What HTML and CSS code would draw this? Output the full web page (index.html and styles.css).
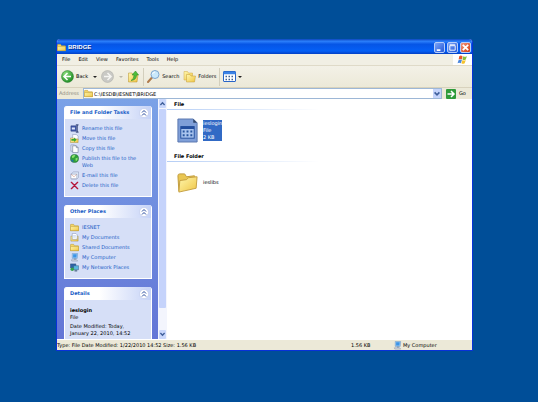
FILE: index.html
```html
<!DOCTYPE html>
<html lang="en">
  <head>
    <meta charset="UTF-8" />
    <meta name="viewport" content="width=device-width, initial-scale=1.0" />
    <title>BRIDGE</title>
    <link rel="stylesheet" href="styles.css">
  </head>
  <body>
    <!-- Shared icons -->
    <svg class="defs" aria-hidden="true">
      <defs>
        <linearGradient id="gold" x1="0" y1="0" x2="1" y2="1">
          <stop offset="0" stop-color="#fff7ae" />
          <stop offset="1" stop-color="#efc544" />
        </linearGradient>
        <radialGradient id="green" cx="35%" cy="30%" r="75%">
          <stop offset="0" stop-color="#8fe07f" />
          <stop offset="1" stop-color="#1c8a22" />
        </radialGradient>
      </defs>
      <symbol id="folder" viewBox="0 0 20 20">
        <path d="M1 17V4q0-1 1-1h6l2 3h8q1 0 1 1v10z" fill="#f3d565" stroke="#b58f2a" />
        <path d="M1 17V8h18v9z" fill="url(#gold)" stroke="#b58f2a" />
      </symbol>
      <symbol id="computer" viewBox="0 0 20 20">
        <path d="M5 1h12l-1 11H5z" fill="#9ccdf6" stroke="#5c86bd" />
        <path d="M7 3h8l-1 7H7z" fill="#3d94e6" />
        <path d="M9 12h4v3H9z" fill="#7d90a8" />
        <path d="M3 15h12l2 3H4z" fill="#d8dde6" stroke="#7a89a0" />
      </symbol>
      <symbol id="chevrons" viewBox="0 0 20 20">
        <circle cx="10" cy="10" r="9" fill="#fff" stroke="#b3bfe6" />
        <path d="m6 9 4-4 4 4M6 15l4-4 4 4" fill="none" stroke="#24479c" stroke-width="2" />
      </symbol>
    </svg>

    <div class="window">
      <header class="title-bar">
        <svg class="icon"><use href="#folder" /></svg>
        <h1>BRIDGE</h1>
        <button class="win-btn" aria-label="Minimize"><svg viewBox="0 0 10 10"><path d="M2 8h4" stroke="#fff" stroke-width="2" /></svg></button>
        <button class="win-btn" aria-label="Maximize"><svg viewBox="0 0 10 10"><path d="M2 3h6v5H2z" fill="none" stroke="#fff" /><path d="M2 2h6" stroke="#fff" /></svg></button>
        <button class="win-btn win-close" aria-label="Close"><svg viewBox="0 0 10 10"><path d="m2 2 6 6M8 2 2 8" stroke="#fff" stroke-width="2" /></svg></button>
      </header>

      <div class="menu-row">
        <nav class="menu">
          <a href="#">File</a>
          <a href="#">Edit</a>
          <a href="#">View</a>
          <a href="#">Favorites</a>
          <a href="#">Tools</a>
          <a href="#">Help</a>
        </nav>
        <div class="flag">
          <svg viewBox="0 0 20 18">
            <path d="M4 2q3-2 6 0L9 8Q6 6 3 8z" fill="#e9582a" />
            <path d="M11 2q3 2 7 0l-2 6q-3 2-6 0z" fill="#86bf3d" />
            <path d="M3 9q3-2 6 0l-2 6q-3-2-6 0z" fill="#4a86dd" />
            <path d="M10 9q3 2 6 0l-2 6q-3 2-6 0z" fill="#f5c32e" />
          </svg>
        </div>
      </div>

      <div class="toolbar">
        <button class="tool">
          <svg class="icon-lg" viewBox="0 0 26 26"><circle cx="13" cy="13" r="12" fill="url(#green)" stroke="#2b7d2f" /><path d="m13 6-7 7 7 7M7 13h13" fill="none" stroke="#fff" stroke-width="3" /></svg>
          Back
          <span class="caret"></span>
        </button>
        <button class="tool tool-forward" aria-label="Forward">
          <svg class="icon-lg" viewBox="0 0 26 26"><circle cx="13" cy="13" r="12" fill="#c9c9c5" stroke="#aaaaa5" /><path d="m13 6 7 7-7 7M19 13H6" fill="none" stroke="#f5f5f2" stroke-width="3" /></svg>
          <span class="caret caret-off"></span>
        </button>
        <button class="tool" aria-label="Up">
          <svg class="icon-lg" viewBox="0 0 26 26"><path d="M3 6h7l2 3h10l-2 15H3z" fill="url(#gold)" stroke="#b58f2a" /><path d="M8 21q6-3 6-11h-4l7-8 6 8h-4q0 10-11 11z" fill="#4fbd3a" stroke="#26801f" /></svg>
        </button>
        <span class="divider"></span>
        <button class="tool">
          <svg class="icon-lg" viewBox="0 0 26 26"><path d="m2 24 8-9" stroke="#b07b4c" stroke-width="4" stroke-linecap="round" /><circle cx="16" cy="9" r="8" fill="#c9e8fb" stroke="#7fa6cd" stroke-width="2" /><path d="M11 8q1-4 5-4" fill="none" stroke="#fff" stroke-width="2" /></svg>
          Search
        </button>
        <button class="tool">
          <svg class="icon-lg" viewBox="0 0 26 26"><path d="M2 20V3h7l2 3h8v14z" fill="url(#gold)" stroke="#d1ab45" /><path d="M7 24V9h7l2 3h9l-2 12z" fill="url(#gold)" stroke="#c39b35" /></svg>
          Folders
        </button>
        <span class="divider"></span>
        <button class="tool tool-views" aria-label="Views">
          <svg class="icon-view" viewBox="0 0 26 22"><rect x="1" y="1" width="24" height="20" rx="1" fill="#fff" stroke="#2865c7" stroke-width="2" /><path d="M1 4h24" stroke="#3c83e5" stroke-width="5" /><path d="M5 11h16M5 17h16" stroke="#40608f" stroke-width="3" stroke-dasharray="3 3" /></svg>
          <span class="caret"></span>
        </button>
      </div>

      <form class="address-bar">
        <label for="address">Address</label>
        <div class="address-box">
          <svg class="icon"><use href="#folder" /></svg>
          <input id="address" type="text" value="C:\IESDB\IESNET\BRIDGE">
          <button class="drop" type="button" aria-label="Show addresses"><svg viewBox="0 0 10 10"><path d="m2 3 3 3 3-3" fill="none" stroke="#3f5f9c" stroke-width="2" /></svg></button>
        </div>
        <button class="go" type="button">
          <svg viewBox="0 0 20 20"><rect width="20" height="20" rx="2" fill="#2f9b3a" /><path d="m10 4 6 6-6 6M15 10H3" fill="none" stroke="#fff" stroke-width="3" /></svg>
          Go
        </button>
      </form>

      <div class="content">
        <aside class="sidebar">
          <section class="panel">
            <div class="panel-head">
              <h2>File and Folder Tasks</h2>
              <button aria-label="Collapse"><svg><use href="#chevrons" /></svg></button>
            </div>
            <ul class="links">
              <li><svg class="icon" viewBox="0 0 20 20"><path d="M2 4h12v12H2z" fill="#4158a8" stroke="#283b7c" /><path d="M4 8h7v4H4z" fill="#dfe7fb" /><path d="M13 2h6M16 2v16M13 18h6" stroke="#1c2e66" stroke-width="2" /></svg><a href="#">Rename this file</a></li>
              <li><svg class="icon" viewBox="0 0 20 20"><path d="M6 1h8l4 4v8H6z" fill="#fff" stroke="#7080a8" /><path d="M1 9h6l2 2h9v8H1z" fill="url(#gold)" stroke="#a88725" /><path d="M3 11h6V8l6 5-6 5v-3H3z" fill="#3aa832" /></svg><a href="#">Move this file</a></li>
              <li><svg class="icon" viewBox="0 0 20 20"><path d="M2 2h8l3 3v11H2z" fill="#e6ebf7" stroke="#66779c" /><path d="M6 4h8l4 4v11H6z" fill="#fff" stroke="#40516f" /><path d="M14 4v4h4" fill="none" stroke="#40516f" /></svg><a href="#">Copy this file</a></li>
              <li><svg class="icon" viewBox="0 0 20 20"><circle cx="10" cy="10" r="9" fill="#2d9f3a" stroke="#16612b" /><path d="M4 5q4-4 8-2l-3 5-4 1zM12 10l5-2q1 6-4 8z" fill="#8de06e" /><path d="m2 12 5 2 1 4q-5-1-6-6z" fill="#256dc0" /></svg><a href="#">Publish this file to the<br />Web</a></li>
              <li><svg class="icon" viewBox="0 0 20 20"><path d="M3 6 8 2h11v12l-4 4H3z" fill="#dbe6f7" stroke="#7a87a8" /><path d="M2 7h13v10H2z" fill="#fff" stroke="#7a87a8" /><path d="m2 7 7 6 6-6" fill="none" stroke="#c87d68" /></svg><a href="#">E-mail this file</a></li>
              <li><svg class="icon" viewBox="0 0 20 20"><path d="m3 3 14 14M17 3 3 17" stroke="#b5173c" stroke-width="3" stroke-linecap="round" /></svg><a href="#">Delete this file</a></li>
            </ul>
          </section>

          <section class="panel">
            <div class="panel-head">
              <h2>Other Places</h2>
              <button aria-label="Collapse"><svg><use href="#chevrons" /></svg></button>
            </div>
            <ul class="links">
              <li><svg class="icon"><use href="#folder" /></svg><a href="#">IESNET</a></li>
              <li><svg class="icon" viewBox="0 0 20 20"><path d="M2 7h16v11H2z" fill="url(#gold)" stroke="#a88725" /><path d="M5 1h8l3 3v10H5z" fill="#fff" stroke="#7080a8" /><path d="M7 6h6M7 9h6" stroke="#7fa5d8" /></svg><a href="#">My Documents</a></li>
              <li><svg class="icon"><use href="#folder" /></svg><a href="#">Shared Documents</a></li>
              <li><svg class="icon"><use href="#computer" /></svg><a href="#">My Computer</a></li>
              <li><svg class="icon" viewBox="0 0 20 20"><path d="M1 2h12v9H1z" fill="#2e62a6" stroke="#264574" /><path d="M8 6h11v9H8z" fill="#58b7df" stroke="#31557f" /><path d="M10 15h6v4h-6z" fill="#657d9a" /><circle cx="5" cy="14" r="4" fill="#36a34a" /></svg><a href="#">My Network Places</a></li>
            </ul>
          </section>

          <section class="panel">
            <div class="panel-head">
              <h2>Details</h2>
              <button aria-label="Collapse"><svg><use href="#chevrons" /></svg></button>
            </div>
            <div class="details">
              <h3>ieslogin</h3>
              <p>File</p>
              <p class="modified">Date Modified: Today,<br />January 22, 2010, 14:52</p>
            </div>
          </section>
        </aside>

        <div class="scrollbar">
          <button aria-label="Scroll up"><svg viewBox="0 0 10 10"><path d="m2 7 3-3 3 3" fill="none" stroke="#3f5f9c" stroke-width="2" /></svg></button>
          <div class="thumb"></div>
          <button aria-label="Scroll down"><svg viewBox="0 0 10 10"><path d="m2 3 3 3 3-3" fill="none" stroke="#3f5f9c" stroke-width="2" /></svg></button>
        </div>

        <main class="files">
          <h2>File</h2>
          <a class="file selected" href="#">
            <svg viewBox="0 0 24 28">
              <path d="M2 2h16l4 4v20H2z" fill="#7f9fd8" stroke="#5875ad" />
              <path d="M18 2v4h4z" fill="#2f4568" />
              <rect x="5" y="10" width="14" height="12" fill="#a9c4ee" stroke="#244f9d" />
              <path d="M5 11h14" stroke="#234e9e" stroke-width="3" />
              <path d="M7 15h10M7 19h10" stroke="#28569f" stroke-width="2" stroke-dasharray="2 2" />
            </svg>
            <span class="file-text">ieslogin<br />File<br />2 KB</span>
          </a>
          <h2>File Folder</h2>
          <a class="file" href="#">
            <svg viewBox="0 0 24 28">
              <path d="M3 23 2 7q0-2 2-2h5l2 3 8-1q1 0 1 2v3z" fill="#e9c652" stroke="#c09b3b" />
              <path d="m3 24 1-12 7-1 2-2 9-1-1 12z" fill="url(#gold)" stroke="#c5a043" />
            </svg>
            <span class="file-text">ieslibs</span>
          </a>
        </main>
      </div>

      <footer class="status-bar">
        <span class="status-info">Type: File Date Modified: 1/22/2010 14:52 Size: 1.56 KB</span>
        <span class="status-size">1.56 KB</span>
        <span class="status-place"><svg class="icon"><use href="#computer" /></svg>My Computer</span>
      </footer>
    </div>
  </body>
</html>
```
FILE: styles.css
```css
* {
  box-sizing: border-box;
}

body {
  display: flex;
  min-height: 100vh;
  margin: 0;
  padding: 39px 65px 51px 56px;
  background-color: #004e98;
  color: #000;
  font-family: Tahoma, "DejaVu Sans", sans-serif;
  font-size: 5px;
  line-height: 7px;
}

h1,
h2,
h3,
p,
ul {
  margin: 0;
  padding: 0;
  font-size: 5px;
}

h1 {
  font-size: 6px;
  font-family: "Liberation Sans", Arial, sans-serif;
}

button,
input {
  margin: 0;
  padding: 0;
  border: none;
  background: none;
  color: inherit;
  font: inherit;
}

a {
  color: inherit;
  text-decoration: none;
}

svg {
  display: block;
  flex: none;
}

.defs {
  position: absolute;
  width: 0;
  height: 0;
}

.icon {
  width: 9px;
  height: 9px;
}

.icon-lg {
  width: 13px;
  height: 13px;
}

.icon-view {
  width: 13px;
  height: 11px;
}

.window {
  display: flex;
  flex-direction: column;
  flex: 1;
  min-width: 0;
  border: 1px solid #0831d9;
  border-top: none;
  border-radius: 4px 4px 0 0;
  background-color: #ece9d8;
  overflow: hidden;
}

.title-bar {
  display: flex;
  align-items: center;
  gap: 2px;
  height: 15px;
  padding: 1px 1px 0 0;
  background: linear-gradient(#0b45bd, #2c7ffb 15%, #0655e6 35%, #0560f6 80%, #0340c5);
  color: white;
}

.title-bar h1 {
  flex: 1;
  text-shadow: 1px 1px 0 #0a2f8a;
}

.win-btn {
  width: 11px;
  height: 11px;
  border: 1px solid #b5cdfa;
  border-radius: 2px;
  background: linear-gradient(135deg, #7ba4f8, #2458d8);
}

.win-close {
  background: linear-gradient(135deg, #f0967c, #d33c14);
}

.menu-row {
  display: flex;
  height: 12px;
  background-color: #f1efe4;
  border-bottom: 1px solid #dfdac8;
}

.menu {
  display: flex;
  flex: 1;
  align-items: center;
  gap: 8px;
  padding-left: 5px;
}

.flag {
  display: flex;
  align-items: center;
  justify-content: center;
  width: 19px;
  background-color: white;
}

.flag svg {
  width: 11px;
  height: 10px;
}

.toolbar {
  display: flex;
  align-items: center;
  gap: 4px;
  height: 22px;
  padding-left: 4px;
  background: linear-gradient(#f3f1e7, #ece9d8);
  border-bottom: 1px solid #d8d2bd;
}

.tool {
  display: flex;
  align-items: center;
  gap: 2px;
}

.caret {
  margin-left: 3px;
  border: 2px solid transparent;
  border-top-color: #222;
  border-bottom: none;
}

.caret-off {
  border-top-color: #bbb8aa;
}

.tool-views .caret {
  margin-left: 0;
}

.divider {
  width: 1px;
  height: 18px;
  margin: 0 -1px;
  background-color: #d3cfbd;
}

.address-bar {
  display: flex;
  align-items: center;
  gap: 4px;
  height: 11px;
  padding-left: 2px;
}

.address-bar label {
  color: #8a887c;
}

.address-box {
  display: flex;
  flex: 1;
  align-items: center;
  gap: 1px;
  height: 11px;
  border: 1px solid #9db7d6;
  background-color: white;
}

.address-box input {
  flex: 1;
  min-width: 0;
  height: 9px;
}

.drop {
  width: 8px;
  height: 9px;
  background-color: #c5d4fb;
}

.go {
  display: flex;
  align-items: center;
  gap: 3px;
  width: 26px;
}

.go svg {
  width: 10px;
  height: 10px;
}

.content {
  display: flex;
  flex: 1 0 240px;
  height: 240px;
  background-color: white;
}

.sidebar {
  display: flex;
  flex-direction: column;
  gap: 8px;
  width: 101px;
  padding: 7px 6px 0 7px;
  background: linear-gradient(#7ba2e7, #6375d6);
  overflow: hidden;
}

.panel {
  flex: none;
  border: 1px solid white;
  border-top: none;
  border-radius: 3px 3px 0 0;
  background-color: #d6dff7;
  overflow: hidden;
}

.panel-head {
  display: flex;
  align-items: center;
  justify-content: space-between;
  height: 13px;
  padding: 0 2px 0 5px;
  background: linear-gradient(90deg, white 40%, #c6d3f7);
  color: #215dc6;
}

.panel-head svg {
  width: 10px;
  height: 10px;
}

.links {
  display: flex;
  flex-direction: column;
  gap: 3px;
  padding: 6px 5px 7px;
  color: #215dc6;
  list-style: none;
}

.links li {
  display: flex;
  gap: 3px;
}

.links .icon {
  height: 9px;
  margin: -1px 0;
}

.details {
  padding: 7px 5px;
}

.modified {
  margin-top: 2px;
}

.scrollbar {
  display: flex;
  flex-direction: column;
  width: 9px;
  padding: 0 1px;
  background-color: #f3f5fd;
}

.scrollbar button {
  height: 9px;
  border-radius: 1px;
  background-color: #c9d7fc;
}

.thumb {
  flex: 1;
  margin: 1px 0 22px;
  border-radius: 1px;
  background-color: #c5d3fb;
}

.files {
  flex: 1;
  min-width: 0;
}

.files h2 {
  padding: 2px 0 1px 7px;
  border-bottom: 1px solid;
  border-image: linear-gradient(90deg, #b4cdf5, white 50%) 1;
}

.file {
  display: flex;
  align-items: center;
  gap: 4px;
  height: 41px;
  padding-left: 9px;
}

.file svg {
  width: 23px;
  height: 27px;
}

.selected .file-text {
  background-color: #316ac5;
  color: white;
}

.status-bar {
  display: flex;
  align-items: center;
  height: 11px;
  border-top: 1px solid #fff;
}

.status-info {
  flex: 1;
}

.status-size {
  width: 42px;
}

.status-place {
  display: flex;
  align-items: center;
  gap: 1px;
  width: 79px;
}
```
